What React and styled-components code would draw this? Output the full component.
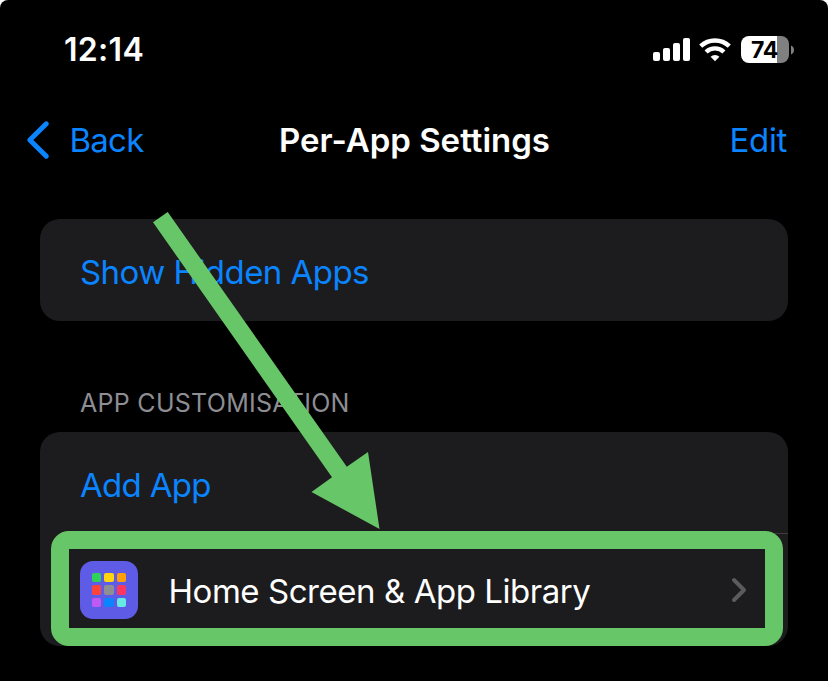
import React from 'react';
import styled, { createGlobalStyle } from 'styled-components';

const GlobalStyle = createGlobalStyle`
  * { box-sizing: border-box; }
  body { margin: 0; background: #fff; }
`;

const Screen = styled.main`
  position: relative;
  width: 828px;
  height: 681px;
  overflow: hidden;
  background: #000;
  border-radius: 8px 8px 0 0;
  font-family: Inter, 'Liberation Sans', sans-serif;
  color: #fff;
`;

const StatusBar = styled.header`
  display: flex;
  align-items: center;
  justify-content: space-between;
  height: 99px;
  padding: 0 33px 0 64px;
`;

const Time = styled.time`
  font-size: 32px;
  font-weight: 600;
  line-height: 40px;
  letter-spacing: 0.3px;
`;

const StatusIcons = styled.div`
  display: flex;
  align-items: center;
`;

const SignalIconSvg = styled.svg`
  display: block;
  margin-right: 8px;
`;

const Battery = styled.div`
  display: flex;
  align-items: center;
  margin-left: 10px;
`;

const BatteryBody = styled.div`
  display: flex;
  align-items: center;
  justify-content: center;
  width: 48px;
  height: 27px;
  padding-right: 1px;
  border-radius: 8px;
  background: linear-gradient(to right, #fff 36px, #808080 36px);
  color: #000;
  font-size: 23px;
  font-weight: 700;
  letter-spacing: -0.2px;
`;

const NavBar = styled.nav`
  display: grid;
  grid-template-columns: 200px 1fr 200px;
  align-items: center;
  height: 82px;
  padding: 0 41px 0 26px;
  font-size: 33px;
  line-height: 40px;
`;

const BackButton = styled.a`
  display: flex;
  align-items: center;
  gap: 19.5px;
  color: #0a84ff;
`;

const Title = styled.h1`
  margin: 0 -8px 0 8px;
  font-size: 33px;
  font-weight: 600;
  text-align: center;
  white-space: nowrap;
`;

const EditButton = styled.a`
  justify-self: end;
  color: #0a84ff;
`;

const Content = styled.section`
  padding: 38px 40px 0;
`;

const Card = styled.div`
  overflow: hidden;
  border-radius: 20px;
  background: #1c1c1e;
`;

const Row = styled.div`
  display: flex;
  align-items: center;
  height: ${(p) => p.$height}px;
  padding: ${(p) => (p.$link ? '4px' : '0')} 41px 0 40px;
  font-size: 33px;
  line-height: 40px;
  color: ${(p) => (p.$link ? '#0a84ff' : '#fff')};
`;

const Label = styled.span`
  letter-spacing: ${(p) => p.$tracking || 0}px;
  white-space: nowrap;
`;

const AppName = styled(Label)`
  padding-top: 2px;
`;

const Divider = styled.div`
  height: 1px;
  margin-left: 129px;
  background: #3d3d41;
`;

const SectionTitle = styled.h2`
  margin: 67px 0 14px 40px;
  font-size: 25px;
  font-weight: 400;
  line-height: 30px;
  color: #8d8d93;
  letter-spacing: 0.28px;
`;

const AppIcon = styled.div`
  display: grid;
  grid-template-columns: repeat(3, 9.5px);
  grid-auto-rows: 9.5px;
  place-content: center;
  gap: 3px;
  width: 58px;
  height: 58px;
  margin-right: 30.5px;
  border-radius: 13px;
  background: #5e5ce6;
`;

const Tile = styled.i`
  border-radius: 2px;
  background: ${(p) => p.$color};
`;

const Chevron = styled.svg`
  margin-left: auto;
`;

const Highlight = styled.div`
  position: absolute;
  left: 51px;
  top: 531px;
  width: 732px;
  height: 115px;
  border: 18px solid #67c667;
  border-radius: 18px;
`;

const Arrow = styled.svg`
  position: absolute;
  left: 150px;
  top: 208px;
`;

const TILES = [
  '#30d158', '#ffd60a', '#ff9f0a',
  '#ff453a', '#8e8e93', '#ff375f',
  '#bf5af2', '#0a84ff', '#66e8e3',
];

function SignalIcon() {
  return (
    <SignalIconSvg width="38" height="24" viewBox="0 0 38 24" fill="#fff">
      <rect x="0" y="14" width="7" height="9" rx="2" />
      <rect x="10" y="10" width="7" height="13" rx="2" />
      <rect x="20" y="5" width="7" height="18" rx="2" />
      <rect x="30" y="0" width="7" height="23" rx="2" />
    </SignalIconSvg>
  );
}

function WifiIcon() {
  return (
    <svg width="32" height="24" viewBox="0 0 32 24">
      <g fill="none" stroke="#fff" strokeWidth="4.4">
        <path d="M1.7 8.2 A20.6 20.6 0 0 1 30.3 8.2" />
        <path d="M7.1 14 A12.8 12.8 0 0 1 24.9 14" />
      </g>
      <path d="M11.6 18.8 A6.3 6.3 0 0 1 20.4 18.8 L16 23.3 Z" fill="#fff" />
    </svg>
  );
}

export default function App() {
  return (
    <>
      <GlobalStyle />
      <Screen>
        <StatusBar>
          <Time>12:14</Time>
          <StatusIcons>
            <SignalIcon />
            <WifiIcon />
            <Battery>
              <BatteryBody>74</BatteryBody>
              <svg width="6" height="10" viewBox="0 0 6 10">
                <path d="M2 0.5 C6 2 6 8 2 9.5 Z" fill="#808080" />
              </svg>
            </Battery>
          </StatusIcons>
        </StatusBar>
        <NavBar>
          <BackButton>
            <svg width="24" height="40" viewBox="0 0 24 40" fill="none" stroke="#0a84ff" strokeWidth="5" strokeLinecap="round" strokeLinejoin="round">
              <path d="M20.3 3.8 L3.8 20 L20.3 36.2" />
            </svg>
            <Label $tracking={-0.75}>Back</Label>
          </BackButton>
          <Title>Per-App Settings</Title>
          <EditButton>
            <Label $tracking={-0.35}>Edit</Label>
          </EditButton>
        </NavBar>
        <Content>
          <Card>
            <Row $height={102} $link>
              <Label $tracking={-0.55}>Show Hidden Apps</Label>
            </Row>
          </Card>
          <SectionTitle>APP CUSTOMISATION</SectionTitle>
          <Card>
            <Row $height={101} $link>
              <Label $tracking={-0.7}>Add App</Label>
            </Row>
            <Divider />
            <Row $height={112}>
              <AppIcon>
                {TILES.map((color) => (
                  <Tile key={color} $color={color} />
                ))}
              </AppIcon>
              <AppName $tracking={-0.45}>Home Screen &amp; App Library</AppName>
              <Chevron width="17" height="26" viewBox="0 0 17 26" fill="none" stroke="#5a5a5f" strokeWidth="4" strokeLinecap="round" strokeLinejoin="round">
                <path d="M4 3 L14 13 L4 23" />
              </Chevron>
            </Row>
          </Card>
        </Content>
        <Arrow width="232" height="324" viewBox="150 208 232 324">
          <path d="M167.7 212 L346.8 466.7 L368 452 L379.5 529 L311.5 492 L332 477.3 L153 222.3 Z" fill="#67c667" />
        </Arrow>
        <Highlight />
      </Screen>
    </>
  );
}
